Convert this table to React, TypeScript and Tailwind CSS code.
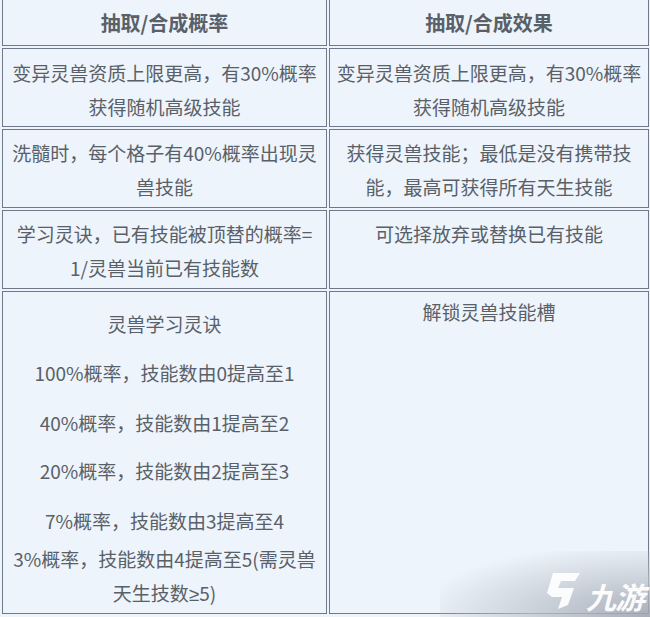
import React from "react";

const cell =
  "border border-[#6e7a8b] bg-[#edf4fb] text-center text-[19px] leading-[34px] text-[#5a6068]";

function Lines({ lines }: { lines: React.ReactNode[] }) {
  return (
    <>
      {lines.map((l, i) => (
        <div key={i} className="whitespace-nowrap">
          {l}
        </div>
      ))}
    </>
  );
}

function Logo() {
  return (
    <div className="absolute right-0 bottom-0 w-[210px] h-[66px] bg-[radial-gradient(ellipse_at_100%_100%,rgba(160,166,176,0.9)_0%,rgba(190,196,205,0.7)_40%,rgba(237,244,251,0)_80%)] flex items-end justify-end pr-[6px] pb-[4px] gap-[2px]">
      <svg width="40" height="42" viewBox="0 0 40 42" className="mb-[2px]">
        <path
          d="M9 4 L36 4 L31 12 L17 12 L14 19 L30 19 L24 36 L14 40 L18 28 L8 28 L3 24 Z"
          fill="rgba(255,255,255,0.92)"
        />
      </svg>
      <span className="text-white text-[30px] leading-[34px] font-bold italic font-['Noto_Sans_CJK_SC',sans-serif] tracking-[-1px] opacity-95">
        九游
      </span>
    </div>
  );
}

export default function App() {
  return (
    <div className="relative w-[650px] h-[617px] bg-[#eef4fa] overflow-hidden font-['Noto_Sans_CJK_SC','Noto_Sans',sans-serif]">
      <div className="grid grid-cols-[325px_320px] grid-rows-[46px_79px_79px_79px_323px] gap-[2px] pl-[2px]">
        <div className={`${cell} border-t-0 flex items-center justify-center font-bold text-[20px] text-[#4a4f57]`}>
          抽取/合成概率
        </div>
        <div className={`${cell} border-t-0 flex items-center justify-center font-bold text-[20px] text-[#4a4f57]`}>
          抽取/合成效果
        </div>

        <div className={`${cell} pt-[7px]`}>
          <Lines lines={["变异灵兽资质上限更高，有30%概率", "获得随机高级技能"]} />
        </div>
        <div className={`${cell} pt-[7px]`}>
          <Lines lines={["变异灵兽资质上限更高，有30%概率", "获得随机高级技能"]} />
        </div>

        <div className={`${cell} pt-[6px]`}>
          <Lines lines={["洗髓时，每个格子有40%概率出现灵", "兽技能"]} />
        </div>
        <div className={`${cell} pt-[6px]`}>
          <Lines lines={["获得灵兽技能；最低是没有携带技", "能，最高可获得所有天生技能"]} />
        </div>

        <div className={`${cell} pt-[6px]`}>
          <Lines lines={["学习灵诀，已有技能被顶替的概率=", "1/灵兽当前已有技能数"]} />
        </div>
        <div className={`${cell} pt-[6px]`}>
          <Lines lines={["可选择放弃或替换已有技能"]} />
        </div>

        <div className={`${cell} pt-[15px] flex flex-col`}>
          <div>灵兽学习灵诀</div>
          <div className="mt-[15px]">100%概率，技能数由0提高至1</div>
          <div className="mt-[16px]">40%概率，技能数由1提高至2</div>
          <div className="mt-[14px]">20%概率，技能数由2提高至3</div>
          <div className="mt-[16px]">7%概率，技能数由3提高至4</div>
          <div className="mt-[4px]">
            <Lines
              lines={[
                "3%概率，技能数由4提高至5(需灵兽",
                <>
                  天生技数<span className="font-['Noto_Sans',sans-serif]">≥</span>5)
                </>,
              ]}
            />
          </div>
        </div>
        <div className={`${cell} pt-[3px]`}>
          <Lines lines={["解锁灵兽技能槽"]} />
        </div>
      </div>
      <Logo />
    </div>
  );
}
